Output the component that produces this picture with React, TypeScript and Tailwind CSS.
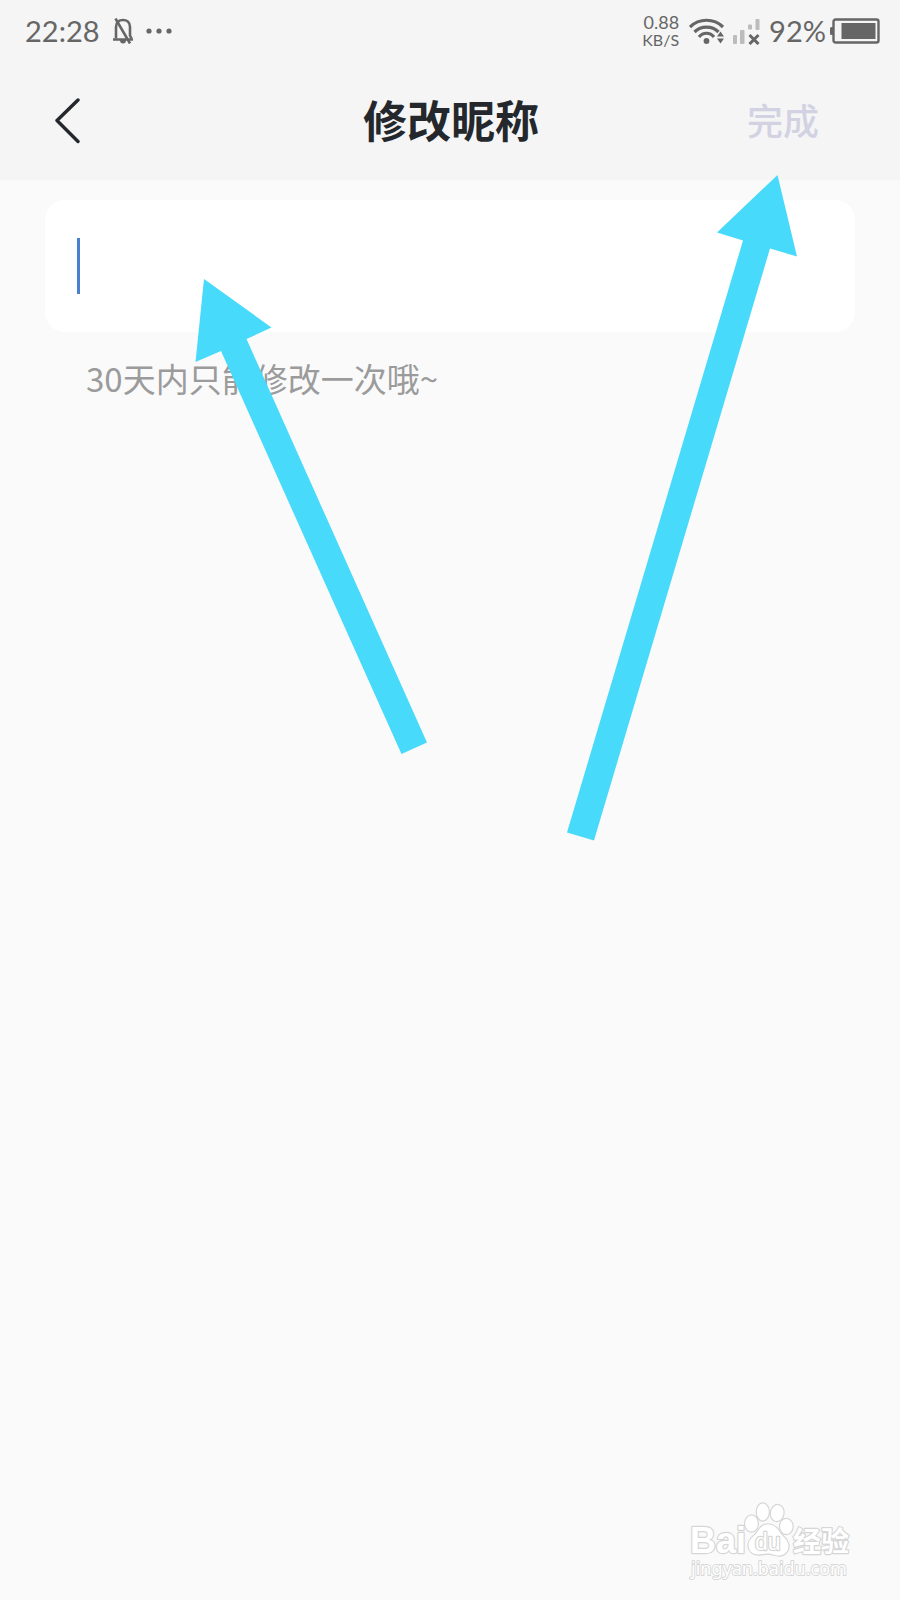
import { useState } from "react";

function MutedBellIcon() {
  return (
    <svg viewBox="0 0 20 26" className="h-[26px] w-5" fill="none" stroke="currentColor" strokeWidth="2.6" aria-hidden="true">
      <path d="M3 20.500V9C3 4.500 6 2 10 2S17 4.500 17 9v8.500l1.500 3" />
      <path d="M0 21.500h20M2.500 0.500l14.500 25" />
      <path d="M7 22h6a3 3.500 0 0 1-6 0z" fill="currentColor" stroke="none" />
    </svg>
  );
}

function DotsIcon() {
  return (
    <svg viewBox="0 0 26 6" className="h-1.5 w-[26px]" fill="currentColor" aria-hidden="true">
      <circle cx="3" cy="3" r="2.600" />
      <circle cx="13" cy="3" r="2.600" />
      <circle cx="23" cy="3" r="2.600" />
    </svg>
  );
}

function WifiIcon() {
  return (
    <svg viewBox="0 0 36 28" className="h-7 w-9" fill="none" stroke="currentColor" strokeWidth="3.2" aria-hidden="true">
      <path d="M1 10C10 1 25 1 34 10" />
      <path d="M5.500 15c6.500-6.500 17.500-6.500 24 0" />
      <path d="M10 20c4-5 11-5 15 0" />
      <g fill="currentColor" stroke="none">
        <circle cx="17.500" cy="24" r="2.900" />
        <path d="M28 19.500l3.500-5 3.500 5zM28 21.500h7l-3.500 5z" />
      </g>
    </svg>
  );
}

function SignalIcon() {
  return (
    <svg viewBox="0 0 28 28" className="size-7" aria-hidden="true">
      <g fill="#bcbcbc">
        <rect x="0" y="18" width="4" height="9" rx="1" />
        <rect x="7" y="13" width="4.500" height="14" rx="1" />
        <rect x="15" y="7.500" width="4" height="5" rx="1" />
        <rect x="22.500" y="2" width="4" height="11" rx="1" />
      </g>
      <path d="M16.500 18l9 9M25.500 18l-9 9" stroke="currentColor" strokeWidth="3" />
    </svg>
  );
}

function BatteryIcon() {
  return (
    <svg viewBox="0 0 50 26" className="h-[26px] w-[50px]" aria-hidden="true">
      <path d="M3 9H1.500Q0 9 0 10.500v5Q0 17 1.500 17H3z" fill="currentColor" />
      <rect x="3.500" y="1.500" width="45" height="23" rx="2" fill="none" stroke="currentColor" strokeWidth="2.400" />
      <rect x="11.500" y="5" width="34" height="16" fill="currentColor" />
    </svg>
  );
}

function StatusBar() {
  return (
    <div className="flex h-[62px] items-center justify-between pl-[25px] pr-5 font-['Lato',sans-serif] text-[29px] text-[#666]">
      <div className="flex items-center gap-[13px]">
        <span>22:28</span>
        <MutedBellIcon />
        <DotsIcon />
      </div>
      <div className="flex items-center">
        <div className="mr-2.5 flex flex-col items-end leading-[18px]">
          <span className="text-[18px]">0.88</span>
          <span className="text-[16px]">KB/S</span>
        </div>
        <WifiIcon />
        <span className="mx-2 flex">
          <SignalIcon />
        </span>
        <span className="mr-1">92%</span>
        <BatteryIcon />
      </div>
    </div>
  );
}

function TitleBar() {
  return (
    <div className="grid h-[118px] grid-cols-[1fr_auto_1fr] items-center pb-1 pl-[45px] pr-[81px]">
      <div className="-mr-9 pt-1">
        <button type="button" aria-label="返回" className="flex h-16 w-12 items-center pl-[9px] text-[#24282c]">
          <svg viewBox="0 0 28 46" className="h-[46px] w-7" fill="none" stroke="currentColor" strokeWidth="3.400" strokeLinecap="round" strokeLinejoin="round" aria-hidden="true">
            <path d="M24 2L3 22.500L24 43.500" />
          </svg>
        </button>
      </div>
      <h1 className="ml-[38px] text-[44px] font-bold leading-[60px] text-[#24282c]">修改昵称</h1>
      <button type="button" className="justify-self-end text-[36px] font-medium text-[#d2d2e2]">完成</button>
    </div>
  );
}

function Watermark() {
  return (
    <svg viewBox="0 0 240 120" className="pointer-events-none absolute bottom-0 right-0 h-[120px] w-60" role="img" aria-label="Baidu 经验 jingyan.baidu.com">
      <g fill="#fff" stroke="#d6d6d6" strokeWidth="2.400" strokeLinejoin="round" className="[paint-order:stroke]">
        <text x="30" y="73" className="font-['Liberation_Sans',sans-serif] text-[36px] font-bold">Bai</text>
        <ellipse cx="91.500" cy="43.500" rx="6.300" ry="8" />
        <ellipse cx="102.800" cy="32" rx="6" ry="8.500" />
        <ellipse cx="117.200" cy="33" rx="6.300" ry="8" transform="rotate(10 117 33)" />
        <ellipse cx="126.300" cy="46.500" rx="6.300" ry="7.500" />
        <path d="M108 44.500c-6 0-8.500 4-11 8s-8.500 6-8.500 13c0 5 4 9 9.500 9 4 0 6-1 10-1s6 2 11 2c5.500 0 9.500-4 9.500-9.500 0-6-5.500-9-8.500-13.500-3-4.500-6-8-12-8z" />
        <text x="95" y="70" className="font-['Liberation_Sans',sans-serif] text-[23px]">du</text>
        <text x="133" y="72" className="font-['Noto_Sans_CJK_SC',sans-serif] text-[28px] font-bold">经验</text>
        <text x="31" y="95" strokeWidth="1.800" className="font-['Noto_Sans',sans-serif] text-[18px]">jingyan.baidu.com</text>
      </g>
    </svg>
  );
}

export default function App() {
  const [name, setName] = useState("");

  return (
    <div className="relative min-h-screen overflow-hidden bg-[#fafafa] font-['Noto_Sans_CJK_SC',sans-serif]">
      <header className="bg-[#f5f5f5]">
        <StatusBar />
        <TitleBar />
      </header>

      <main className="px-[45px] pt-5">
        <div className="relative flex h-[132px] items-center rounded-[20px] bg-white">
          <input
            id="nickname"
            aria-label="昵称"
            aria-describedby="nickname-hint"
            value={name}
            onChange={(event) => setName(event.target.value)}
            className="peer h-full w-full rounded-[20px] bg-transparent px-8 text-[36px] text-[#24282c] caret-[#4a80d0] outline-none"
          />
          {name === "" && (
            <span className="pointer-events-none absolute left-8 h-14 w-[3px] bg-[#4a80d0] peer-focus:hidden" />
          )}
        </div>
        <p id="nickname-hint" className="pl-[41px] pt-[22px] text-[33px] leading-[48px] text-[#9b9b9b]">
          30天内只能修改一次哦~
        </p>
      </main>

      <svg viewBox="0 0 232 476" className="pointer-events-none absolute left-[195px] top-[279px] h-[476px] w-[232px]" fill="#48dafb" aria-hidden="true">
        <path d="M9 0L76.500 48.500L51.500 60L232 463.500L206.500 475L26 72L0.500 83z" />
      </svg>
      <svg viewBox="0 0 230 666" className="pointer-events-none absolute right-[103px] top-[175px] h-[666px] w-[230px]" fill="#48dafb" aria-hidden="true">
        <path d="M210.500 0L230 81.500L203 73.500L27 665.500L0 657.500L176 65.500L150 57.500z" />
      </svg>
      <Watermark />
    </div>
  );
}
